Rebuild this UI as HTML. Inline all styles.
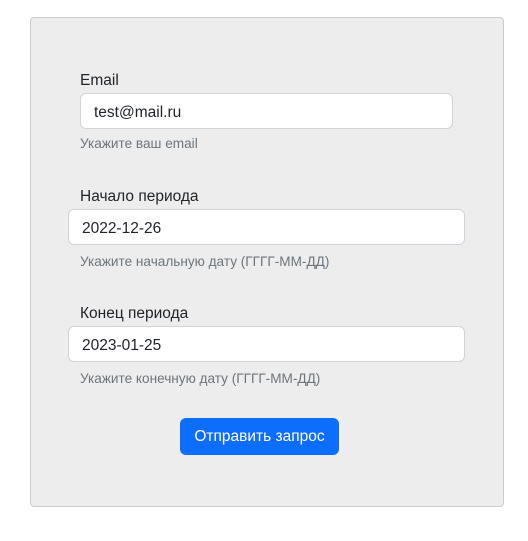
<!DOCTYPE html>
<html><head><meta charset="utf-8"><style>
body{margin:0;background:#fff;font-family:"Liberation Sans","DejaVu Sans",sans-serif;width:528px;height:541px;position:relative;color:#212529}
.card{position:absolute;left:30px;top:17px;width:472px;height:488px;background:#ededed;border:1px solid #ccc;border-radius:4px}
.lbl{position:absolute;font-size:15.5px;color:#212529}
.inp{position:absolute;height:36px;background:#fff;border:1px solid #ced4da;border-radius:6px;box-sizing:border-box;font-size:15.5px;line-height:37px}
.hint{position:absolute;font-size:13.6px;color:#6c757d}
.btn{position:absolute;left:180px;top:418px;width:159px;height:37px;background:#0d6efd;border-radius:6px;color:#fff;font-size:15.5px;line-height:38px;text-align:center}
</style></head><body>
<div class="card"></div>
<div class="lbl" style="left:80px;top:72px">Email</div>
<div class="inp" style="left:80px;top:93px;width:373px;padding-left:13px">test@mail.ru</div>
<div class="hint" style="left:80px;top:136px">Укажите ваш email</div>
<div class="lbl" style="left:80px;top:188px">Начало периода</div>
<div class="inp" style="left:68px;top:209px;width:397px;padding-left:13px">2022-12-26</div>
<div class="hint" style="left:80px;top:254px">Укажите начальную дату (ГГГГ-ММ-ДД)</div>
<div class="lbl" style="left:80px;top:305px">Конец периода</div>
<div class="inp" style="left:68px;top:326px;width:397px;padding-left:13px">2023-01-25</div>
<div class="hint" style="left:80px;top:371px">Укажите конечную дату (ГГГГ-ММ-ДД)</div>
<div class="btn">Отправить запрос</div>
</body></html>
